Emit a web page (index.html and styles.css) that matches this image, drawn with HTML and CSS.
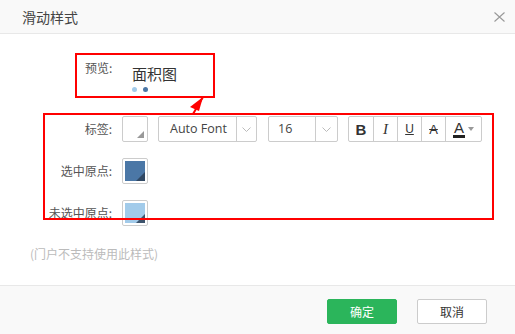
FILE: index.html
```html
<!DOCTYPE html>
<html lang="zh-CN">
<head>
  <meta charset="UTF-8" />
  <title>滑动样式</title>
  <link rel="stylesheet" href="styles.css">
</head>
<body>
  <div class="dialog">
    <header class="header">
      <span class="title">滑动样式</span>
      <svg class="close" width="11" height="10" viewBox="0 0 11 10"><path d="M0.5 0.5 L10.5 9.5 M10.5 0.5 L0.5 9.5" stroke="#999" stroke-width="1.1" fill="none"/></svg>
    </header>

    <section class="content">
      <div class="preview">
        <span class="preview-label">预览:</span>
        <div class="preview-chart">
          <div class="preview-title">面积图</div>
          <div class="dots"><span class="dot light"></span><span class="dot dark"></span></div>
        </div>
      </div>

      <div class="form">
        <label class="row-label">标签:</label>
        <div class="controls">
          <div class="swatch blank"><span class="corner"></span></div>
          <div class="select font-select">
            <span class="select-text">Auto Font</span>
            <span class="select-arrow"><svg width="9" height="5" viewBox="0 0 9 5"><path d="M0.5 0.5 L4.5 4.5 L8.5 0.5" stroke="#bbb" fill="none"/></svg></span>
          </div>
          <div class="select size-select">
            <span class="select-text">16</span>
            <span class="select-arrow"><svg width="9" height="5" viewBox="0 0 9 5"><path d="M0.5 0.5 L4.5 4.5 L8.5 0.5" stroke="#bbb" fill="none"/></svg></span>
          </div>
          <div class="btn-group">
            <span class="tool bold">B</span>
            <span class="tool italic">I</span>
            <span class="tool under">U</span>
            <span class="tool strike">A</span>
            <span class="tool color"><span class="color-a">A</span><span class="caret"></span></span>
          </div>
        </div>

        <label class="row-label">选中原点:</label>
        <div class="controls">
          <div class="swatch"><span class="fill" style="background:#4b77a6"></span><span class="corner dark-corner"></span></div>
        </div>

        <label class="row-label">未选中原点:</label>
        <div class="controls">
          <div class="swatch"><span class="fill" style="background:#a2cbea"></span><span class="corner dark-corner"></span></div>
        </div>
      </div>

      <p class="note">(门户不支持使用此样式)</p>

      <div class="mark mark-preview"></div>
      <div class="mark mark-form"></div>
      <svg class="mark-arrow" width="20" height="20" viewBox="0 0 20 20">
        <polygon points="17,1 4,11 13,15" fill="#f00"/>
        <line x1="17" y1="1" x2="7" y2="18" stroke="#f00" stroke-width="2"/>
      </svg>
    </section>

    <footer class="footer">
      <button class="btn ok">确定</button>
      <button class="btn cancel">取消</button>
    </footer>
  </div>
</body>
</html>
```

FILE: styles.css
```css
* { box-sizing: border-box; margin: 0; padding: 0; }
body { font-family: "Noto Sans CJK SC", "Open Sans", sans-serif; font-size: 12px; color: #333; background: #fff; }
.dialog { width: 515px; height: 334px; display: flex; flex-direction: column; }

.header { height: 34px; background: #f9f9f9; border-bottom: 1px solid #e8e8e8; display: flex; align-items: center; justify-content: space-between; padding: 0 10px 0 22px; }
.title { font-size: 14px; color: #444; }
.close { display: block; margin-top: 1px; }

.content { flex: 1; position: relative; }

.preview { display: flex; margin: 26px 0 0 85px; }
.preview-label { line-height: 16px; color: #555; width: 28px; }
.preview-chart { margin-left: 19px; padding-top: 4px; }
.preview-title { font-size: 15px; line-height: 20px; color: #333; }
.dots { display: flex; gap: 6px; margin-top: 3px; }
.dot { width: 5px; height: 5px; border-radius: 50%; }
.dot.light { background: #a2cbea; }
.dot.dark { background: #4b77a6; }

.form { display: grid; grid-template-columns: 112px auto; column-gap: 10px; row-gap: 16px; margin-top: 24px; }
.row-label { text-align: right; line-height: 26px; color: #555; }
.controls { display: flex; align-items: center; height: 26px; }

.swatch { width: 26px; height: 26px; border: 1px solid #ccc; border-radius: 2px; background: #fff; position: relative; padding: 2px; }
.swatch .fill { display: block; width: 100%; height: 100%; }
.corner { position: absolute; right: 3px; bottom: 3px; width: 0; height: 0; border-left: 7px solid transparent; border-bottom: 7px solid #999; }
.dark-corner { right: 2px; bottom: 2px; border-left-width: 9px; border-bottom: 9px solid #2b3f57; opacity: 0.85; }

.select { display: flex; height: 26px; border: 1px solid #ccc; border-radius: 2px; margin-left: 10px; }
.select-text { flex: 1; line-height: 24px; color: #444; font-family: "Open Sans", "Noto Sans CJK SC", sans-serif; font-size: 12.5px; }
.select-arrow { border-left: 1px solid #ccc; display: flex; align-items: center; justify-content: center; }
.font-select { width: 99px; }
.font-select .select-text { padding-left: 11px; }
.font-select .select-arrow { width: 20px; }
.size-select { width: 70px; margin-left: 11px; }
.size-select .select-text { padding-left: 9px; }
.size-select .select-arrow { width: 22px; }

.btn-group { display: flex; height: 26px; margin-left: 10px; border: 1px solid #ccc; border-radius: 2px; }
.tool { width: 24px; display: flex; align-items: center; justify-content: center; border-left: 1px solid #ccc; font-size: 14px; color: #333; font-family: "Liberation Sans", sans-serif; }
.tool:first-child { border-left: none; }
.bold { font-weight: bold; font-size: 15px; }
.italic { font-family: "Liberation Serif", serif; font-style: italic; font-size: 15px; }
.under { text-decoration: underline; font-size: 12px; }
.strike { text-decoration: line-through; font-size: 13px; }
.color { width: 36px; gap: 3px; }
.color-a { font-size: 15px; line-height: 14px; border-bottom: 3px solid #222; padding: 0 1px; }
.caret { width: 0; height: 0; border-left: 3px solid transparent; border-right: 3px solid transparent; border-top: 4px solid #999; }

.note { margin: 20px 0 0 30px; line-height: 16px; color: #bbb; }

.mark { position: absolute; border: 2px solid #f00; }
.mark-preview { left: 75px; top: 19px; width: 140px; height: 45px; }
.mark-form { left: 43px; top: 79px; width: 451px; height: 107px; }
.mark-arrow { position: absolute; left: 186px; top: 62px; }

.footer { height: 49px; background: #f9f9f9; border-top: 1px solid #e8e8e8; display: flex; justify-content: flex-end; align-items: center; gap: 20px; padding: 2px 28px 0 0; }
.btn { width: 70px; height: 25px; border-radius: 2px; font-family: inherit; font-size: 12px; }
.ok { background: #2bb55b; border: 1px solid #2bb55b; color: #fff; }
.cancel { background: #fff; border: 1px solid #ccc; color: #333; }
```
